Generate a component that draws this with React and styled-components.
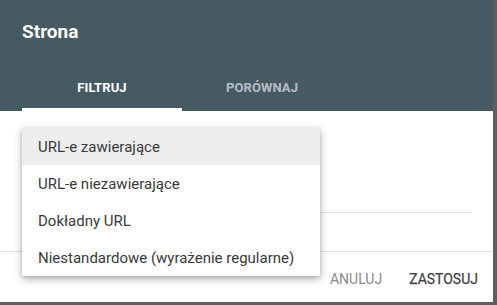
import React from 'react';
import styled, { createGlobalStyle } from 'styled-components';

const Global = createGlobalStyle`
  html, body {
    margin: 0;
    padding: 0;
    background: #5c5f61;
    font-family: Roboto, "Noto Sans", Arial, sans-serif;
  }
`;

const Dialog = styled.div`
  position: relative;
  width: 493px;
  height: 302px;
  background: #fff;
  display: flex;
  flex-direction: column;
`;

const Header = styled.header`
  background: #465a64;
  height: 111px;
  padding: 0 22px;
  box-sizing: border-box;
  display: flex;
  flex-direction: column;
`;

const Title = styled.h1`
  margin: 0;
  padding-top: 20px;
  height: 63px;
  box-sizing: border-box;
  font-size: 19px;
  line-height: 24px;
  font-weight: 700;
  color: #fff;
`;

const Tabs = styled.div`
  display: flex;
  flex: 1;
`;

const Tab = styled.div`
  width: 160px;
  display: flex;
  align-items: center;
  justify-content: center;
  padding-top: 3px;
  box-sizing: border-box;
  font-size: 13px;
  font-weight: 700;
  letter-spacing: 0.1px;
  color: ${(p) => (p.active ? '#fff' : 'rgba(255,255,255,0.62)')};
  border-bottom: 3px solid ${(p) => (p.active ? '#fff' : 'transparent')};
`;

const Body = styled.div`
  height: 141px;
  padding: 0 21px 0 22px;
  box-sizing: border-box;
  border-bottom: 1px solid #e0e0e0;
  display: flex;
  flex-direction: column;
  justify-content: flex-end;
`;

const FieldLine = styled.div`
  height: 1px;
  background: #e0e0e0;
  margin-bottom: 38px;
`;

const Footer = styled.footer`
  flex: 1;
  display: flex;
  justify-content: flex-end;
  align-items: center;
  gap: 27px;
  padding: 4px 15px 0 0;
`;

const Button = styled.button`
  border: 0;
  background: none;
  padding: 0;
  font-family: inherit;
  font-size: 14px;
  font-weight: 400;
  letter-spacing: 0;
  color: ${(p) => (p.primary ? '#3f3f3f' : '#8a8a8a')};
  -webkit-text-stroke: ${(p) => (p.primary ? '0.25px #3f3f3f' : '0')};
`;

const Menu = styled.ul`
  position: absolute;
  left: 22px;
  top: 128px;
  width: 298px;
  margin: 0;
  padding: 0;
  list-style: none;
  background: #fff;
  box-shadow: 0 3px 8px rgba(0, 0, 0, 0.3), 0 1px 3px rgba(0, 0, 0, 0.12);
`;

const Item = styled.li`
  height: 37px;
  display: flex;
  align-items: center;
  padding-left: 16px;
  font-size: 15px;
  color: #3a3a3a;
  background: ${(p) => (p.selected ? '#eeeeee' : 'transparent')};
`;

const options = [
  'URL-e zawierające',
  'URL-e niezawierające',
  'Dokładny URL',
  'Niestandardowe (wyrażenie regularne)',
];

export default function App() {
  return (
    <>
      <Global />
      <Dialog>
        <Header>
          <Title>Strona</Title>
          <Tabs>
            <Tab active>FILTRUJ</Tab>
            <Tab>PORÓWNAJ</Tab>
          </Tabs>
        </Header>
        <Body>
          <FieldLine />
        </Body>
        <Footer>
          <Button>ANULUJ</Button>
          <Button primary>ZASTOSUJ</Button>
        </Footer>
        <Menu>
          {options.map((o, i) => (
            <Item key={o} selected={i === 0}>
              {o}
            </Item>
          ))}
        </Menu>
      </Dialog>
    </>
  );
}
